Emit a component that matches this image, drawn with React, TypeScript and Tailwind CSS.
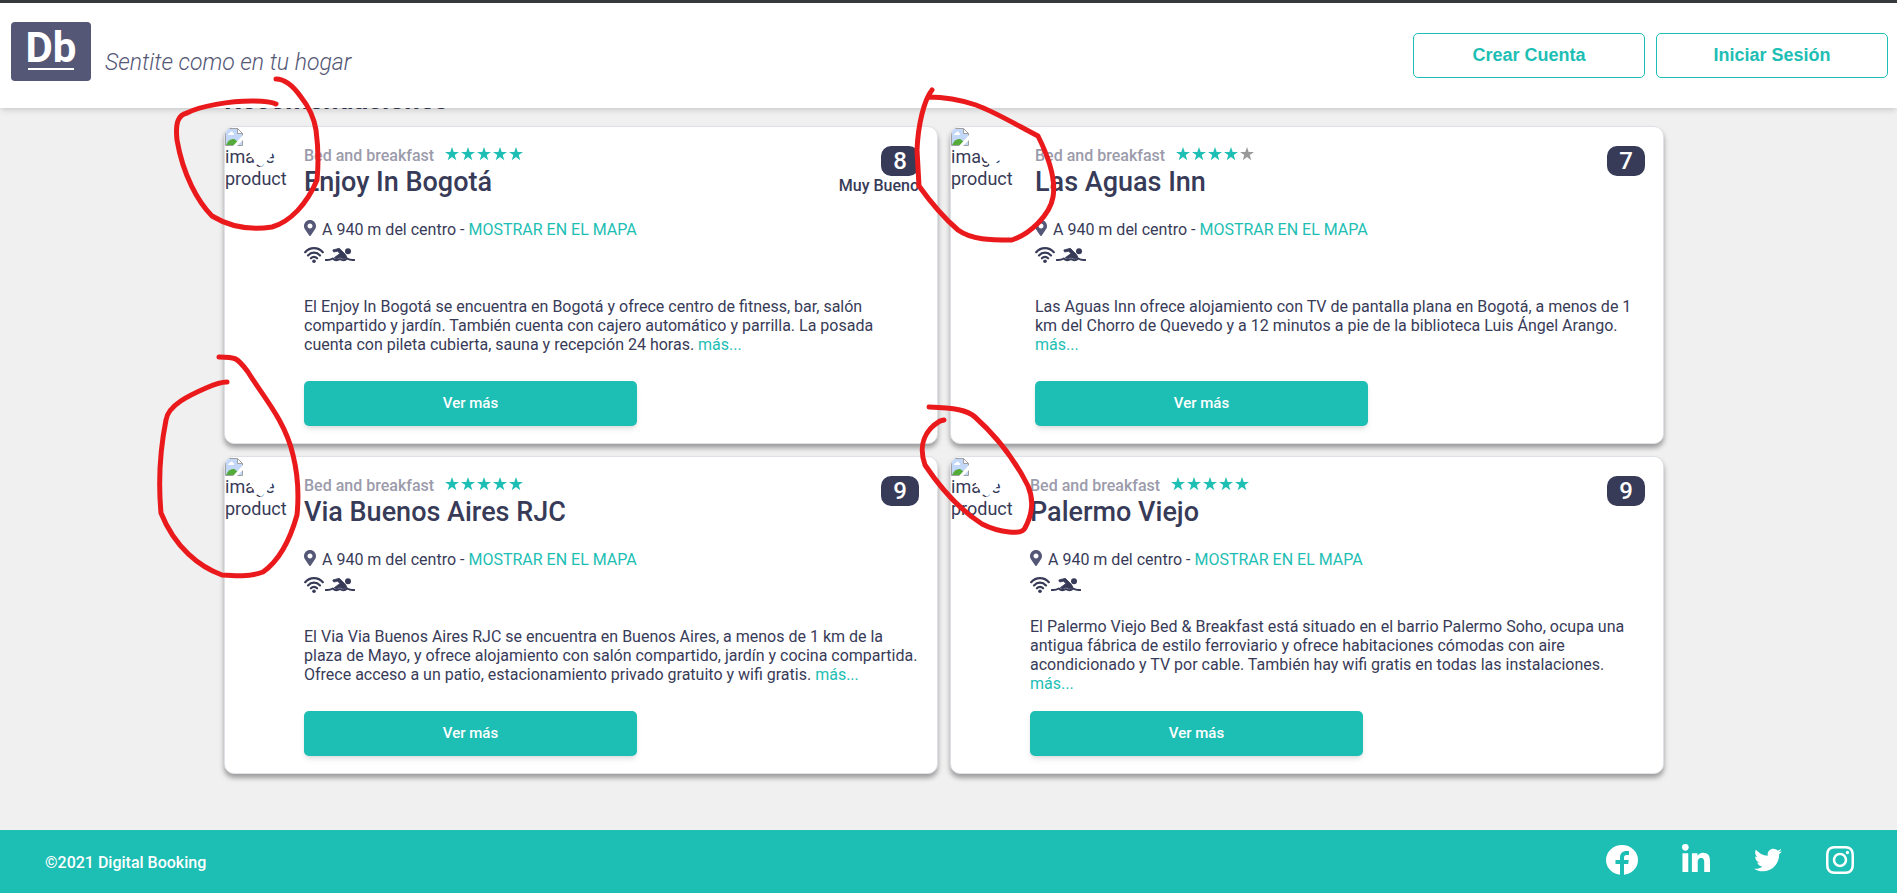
import React from "react";
import { FaLinkedinIn, FaTwitter, FaInstagram, FaMapMarkerAlt, FaHeart } from "react-icons/fa";

type Hotel = {
  name: string;
  stars: number;
  score: number;
  label?: string;
  text: string;
  wide?: boolean;
};

const hotels: Hotel[] = [
  {
    name: "Enjoy In Bogotá",
    stars: 5,
    score: 8,
    label: "Muy Bueno",
    text: "El Enjoy In Bogotá se encuentra en Bogotá y ofrece centro de fitness, bar, salón compartido y jardín. También cuenta con cajero automático y parrilla. La posada cuenta con pileta cubierta, sauna y recepción 24 horas.",
  },
  {
    name: "Las Aguas Inn",
    stars: 4,
    score: 7,
    wide: true,
    text: "Las Aguas Inn ofrece alojamiento con TV de pantalla plana en Bogotá, a menos de 1 km del Chorro de Quevedo y a 12 minutos a pie de la biblioteca Luis Ángel Arango.",
  },
  {
    name: "Via Buenos Aires RJC",
    stars: 5,
    score: 9,
    text: "El Via Via Buenos Aires RJC se encuentra en Buenos Aires, a menos de 1 km de la plaza de Mayo, y ofrece alojamiento con salón compartido, jardín y cocina compartida. Ofrece acceso a un patio, estacionamiento privado gratuito y wifi gratis.",
  },
  {
    name: "Palermo Viejo",
    stars: 5,
    score: 9,
    text: "El Palermo Viejo Bed & Breakfast está situado en el barrio Palermo Soho, ocupa una antigua fábrica de estilo ferroviario y ofrece habitaciones cómodas con aire acondicionado y TV por cable. También hay wifi gratis en todas las instalaciones.",
  },
];

const strokes = [
  "M276 79 C286 79 294 87 301 97 C309 107 314 118 316 130 C318 145 319 160 317 180 C307 204 290 222 272 227 C252 230 230 227 212 216 C198 202 183 175 177 140 C175 121 179 115 187 113 C200 106 230 101 252 101 C264 101 272 102 276 104",
  "M932 90 C924 100 918 125 917 150 L919 186 C929 200 944 218 958 230 C972 240 990 240 1012 240 C1030 234 1050 215 1053 197 C1056 180 1050 160 1038 136 C1015 124 995 112 976 105 C955 98 940 97 928 97",
  "M219 357 C235 357 237 357 248 372 C262 395 285 420 293 455 C298 475 299 495 297 515 C290 540 280 560 263 572 C250 577 235 576 222 575 C200 567 175 548 161 513 C158 480 160 450 166 420 C168 405 190 395 206 388 C215 384 220 382 227 382",
  "M929 407 C955 408 967 410 975 417 C995 435 1015 460 1028 486 C1034 500 1032 515 1025 528 C1022 535 1000 533 982 524 C965 513 945 495 925 465 C918 445 925 430 940 421 L944 420",
];

function BrokenImage() {
  return (
    <svg viewBox="0 0 18 18" className="size-[18px]" aria-hidden="true">
      <path d="M0.5 0.5H12.5L17.5 5.500V17.5H0.5Z" fill="#c3d7f8" stroke="#a0a0a0" />
      <path d="M12.5 0.5V5.5H17.5Z" fill="#fff" stroke="#a0a0a0" />
      <path d="M3 7C3 5.500 4.500 5.500 5 4.500C6 3 8 3.500 8 5C9.500 5 9.500 7 8.500 7Z" fill="#fff" />
      <path d="M1 17C3 12 7 10 10 11.500L13 14V17Z" fill="#55ab3a" />
      <path d="M18 7L8 18H12L18 12Z" fill="#fff" />
    </svg>
  );
}

function Star({ on }: { on: boolean }) {
  return (
    <svg viewBox="0 0 16 16" className={on ? "size-4 text-[#1dbeb4]" : "size-4 text-[#999999]"} fill="currentColor" aria-hidden="true">
      <path d="M8 1L9.700 6H15L10.700 9.100L12.300 14.200L8 11L3.700 14.200L5.300 9.100L1 6H6.300Z" />
    </svg>
  );
}

function Wifi() {
  return (
    <svg viewBox="0 0 20 16" className="h-4 w-5" fill="none" stroke="currentColor" strokeWidth="2.200" strokeLinecap="round" aria-hidden="true">
      <path d="M1.200 5.200C6 -0.200 14 -0.200 18.800 5.200" />
      <path d="M4 8.400C7.300 4.800 12.700 4.800 16 8.400" />
      <path d="M6.900 11.300C8.700 9.500 11.300 9.500 13.100 11.300" />
      <circle cx="10" cy="14.200" r="1.800" fill="currentColor" stroke="none" />
    </svg>
  );
}

function Swimmer() {
  return (
    <svg viewBox="0 0 30 16" className="h-4 w-[30px]" fill="none" stroke="currentColor" strokeLinecap="round" strokeLinejoin="round" aria-hidden="true">
      <path d="M0.800 13C3.500 13.400 5.500 13 7.800 11.500C10 13.700 12.500 13.500 15 12C17.500 13.700 20 13.500 22.200 11.500C24.500 13 26.500 13.400 29.200 13" strokeWidth="2" />
      <path d="M9.500 10.500L15 6.500L12.500 4.300L8.600 5L7.800 3L14.300 1.300L20.500 7.500L22 10.500L19 12L15 10.500L11.500 12Z" fill="currentColor" strokeWidth="0.800" />
      <circle cx="23" cy="4.300" r="3" fill="currentColor" stroke="none" />
    </svg>
  );
}

function Facebook() {
  return (
    <svg viewBox="0 0 32 30" className="h-[30px] w-8" aria-hidden="true">
      <ellipse cx="16" cy="15" rx="16" ry="15" fill="#fff" />
      <path d="M14 30V19H9.500V15H14V12.500C14 8.500 16.500 6 20.500 6H23V10H20.500C18.800 10 18 11 18 12.500V15H22.700L22.200 19H18V30Z" fill="#1dbeb4" />
    </svg>
  );
}

function Card({ hotel }: { hotel: Hotel }) {
  return (
    <article className="flex min-h-[318px] overflow-hidden rounded-[10px] border border-[#dee2e6] bg-white shadow-[0_4px_5px_rgba(0,0,0,0.35)]">
      <div className={hotel.wide ? "relative w-[69px] shrink-0 pt-px text-lg leading-[22px]" : "relative w-16 shrink-0 pt-px text-lg leading-[22px]"}>
        <BrokenImage />
        <p>image product</p>
        <FaHeart className="absolute top-[19px] right-[17px] size-[22px] text-white" />
      </div>
      <div className="flex grow flex-col pt-[18px] pr-[18px] pb-[17px] pl-[15px]">
        <div className="flex justify-between">
          <div>
            <div className="flex items-center gap-[10px]">
              <p className="leading-[21px] font-medium text-[#9b9bab]">Bed and breakfast</p>
              <div className="flex pb-1">
                {[1, 2, 3, 4, 5].map((n) => (
                  <Star key={n} on={n <= hotel.stars} />
                ))}
              </div>
            </div>
            <h2 className="text-[27px] leading-8 font-medium">{hotel.name}</h2>
          </div>
          <div className="flex flex-col items-end pt-px">
            <span className="flex h-[30px] w-[38px] items-center justify-center rounded-[10px] bg-[#383b58] text-2xl font-medium text-white">{hotel.score}</span>
            {hotel.label && <span className="leading-5 font-medium">{hotel.label}</span>}
          </div>
        </div>
        <p className="mt-[22px] flex items-start leading-5">
          <FaMapMarkerAlt className="mr-1.5 h-4 w-3 text-[#545776]" />
          A 940 m del centro -&nbsp;
          <a href="#mapa" className="text-[#1dbeb4]">MOSTRAR EN EL MAPA</a>
        </p>
        <div className="mt-[7px] flex gap-px">
          <Wifi />
          <Swimmer />
        </div>
        <p className="my-auto pt-1.5 leading-[19px]">
          {hotel.text} <a href="#mas" className="text-[#1dbeb4]">más...</a>
        </p>
        <button className="h-[45px] w-[333px] rounded-[5px] bg-[#1dbeb4] text-[15px] font-medium text-white shadow-md">Ver más</button>
      </div>
    </article>
  );
}

export default function App() {
  return (
    <div className="relative flex min-h-screen flex-col bg-[#f0f0f0] font-[Roboto,sans-serif] text-base text-[#383b58]">
      <header className="z-10 flex h-[108px] items-center justify-between border-t-[3px] border-[#38393d] bg-white pr-[9px] pl-[11px] shadow-md">
        <a href="#inicio" className="flex items-end gap-3.5 pb-2">
          <span className="flex h-[59px] w-20 flex-col items-center rounded bg-[#545776] text-white">
            <span className="pt-1.5 text-[42px] leading-10 font-bold">Db</span>
            <span className="h-0.5 w-[46px] bg-white" />
          </span>
          <span className="pb-1 text-[23px] leading-7 font-light text-[#545776] italic">Sentite como en tu hogar</span>
        </a>
        <nav className="flex gap-[11px] font-['Liberation_Sans',sans-serif] text-lg font-bold text-[#1dbeb4]">
          <button className="h-[45px] w-[232px] rounded-[5px] border border-[#1dbeb4] pb-0.5">Crear Cuenta</button>
          <button className="h-[45px] w-[232px] rounded-[5px] border border-[#1dbeb4] pb-0.5">Iniciar Sesión</button>
        </nav>
      </header>
      <main className="mr-[233px] ml-56 grow">
        <div className="flex h-[18px] items-start">
          <h1 className="-mt-6 text-[27px] leading-8 font-bold">Recomendaciones</h1>
        </div>
        <section className="grid grid-cols-2 gap-x-3 gap-y-3">
          {hotels.map((h) => (
            <Card key={h.name} hotel={h} />
          ))}
        </section>
      </main>
      <footer className="flex h-[63px] items-center justify-between bg-[#1dbeb4] pr-[43px] pl-[45px] text-white">
        <p className="pt-0.5 font-medium">©2021 Digital Booking</p>
        <div className="flex items-center gap-11 pb-1">
          <Facebook />
          <FaLinkedinIn className="h-8 w-7" />
          <FaTwitter className="h-8 w-7" />
          <FaInstagram className="h-8 w-7" />
        </div>
      </footer>
      <svg className="pointer-events-none absolute top-0 left-0 z-20 h-[893px] w-[1897px]" viewBox="0 0 1897 893" fill="none" stroke="#ea1a1c" strokeWidth="5" strokeLinecap="round" strokeLinejoin="round" aria-hidden="true">
        {strokes.map((d) => (
          <path key={d} d={d} />
        ))}
      </svg>
    </div>
  );
}
